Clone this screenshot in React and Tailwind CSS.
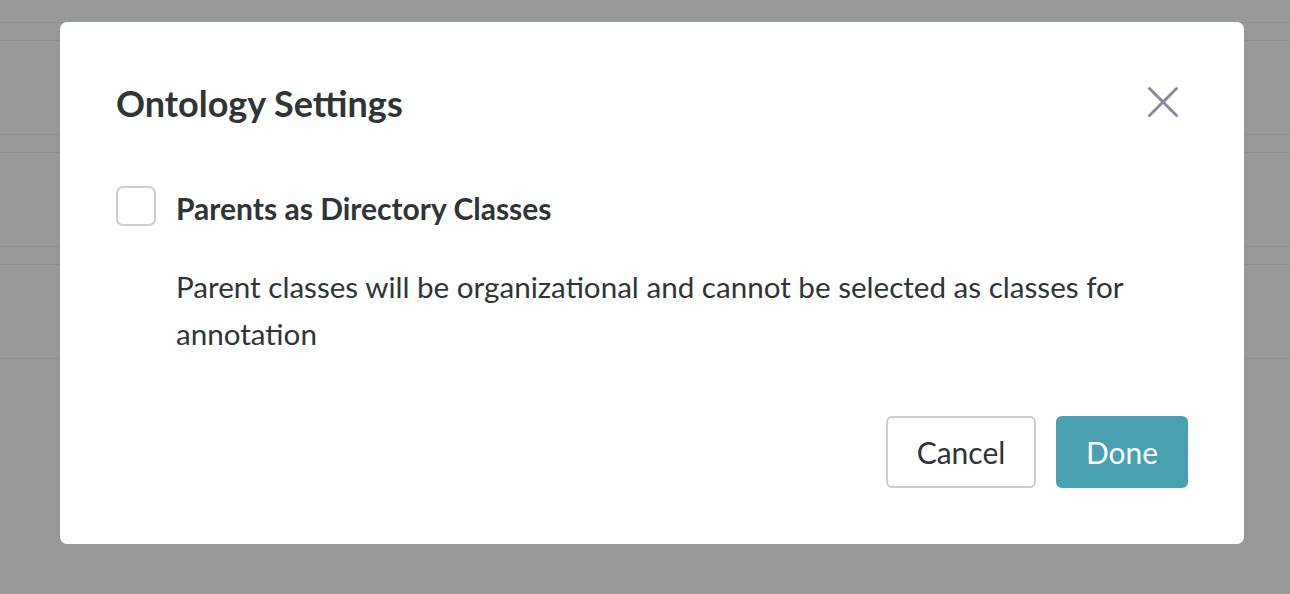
import { useState } from 'react'

function BackgroundRows() {
  // faint table rows behind the dim overlay
  const groups = [0, 1, 2]
  return (
    <div className="pt-[22px]">
      {groups.map((g) => (
        <div key={g}>
          <div className="h-[18px] border-t border-[#8b8e8f]" />
          <div className="h-[94px] border-t border-[#8b8e8f]" />
        </div>
      ))}
      <div className="border-t border-[#8b8e8f]" />
    </div>
  )
}

function CloseIcon() {
  return (
    <svg width="32" height="32" viewBox="0 0 32 32" fill="none">
      <path d="M2.5 2.5L29.5 29.5M29.5 2.5L2.5 29.5" stroke="#898b9c" strokeWidth="3" strokeLinecap="round" />
    </svg>
  )
}

export default function App() {
  const [checked, setChecked] = useState(false)

  return (
    <div className="relative w-[1290px] h-[594px] overflow-hidden bg-[#979a9a] font-['Lato','Noto_Sans',sans-serif] text-[#2e3536]">
      <BackgroundRows />

      {/* Modal */}
      <div className="absolute left-[60px] top-[22px] w-[1184px] h-[522px] bg-white rounded-[7px] px-[56px] pt-[66px] flex flex-col">
        <div className="flex items-center justify-between h-[30px]">
          <h2 className="text-[36px] leading-none font-bold">Ontology Settings</h2>
          <button className="mr-[9px] -mt-[2px]">
            <CloseIcon />
          </button>
        </div>

        <div className="mt-[68px] flex items-center gap-[20px]">
          <button
            onClick={() => setChecked(!checked)}
            className="w-[40px] h-[40px] rounded-[7px] border-2 border-[#cbccd8] bg-white shrink-0"
          />
          <span className="text-[30px] font-bold leading-none pt-[3px]">Parents as Directory Classes</span>
        </div>

        <p className="mt-[37px] ml-[60px] text-[29.6px] leading-[47px] pr-[40px]">
          Parent classes will be organizational and cannot be selected as classes for annotation
        </p>

        <div className="mt-auto mb-[56px] flex justify-end gap-[20px]">
          <button className="w-[150px] h-[72px] rounded-[6px] border-2 border-[#cbccd8] bg-white text-[30px]">
            Cancel
          </button>
          <button className="w-[132px] h-[72px] rounded-[6px] bg-[#48a1b1] text-white text-[30px]">
            Done
          </button>
        </div>
      </div>
    </div>
  )
}
